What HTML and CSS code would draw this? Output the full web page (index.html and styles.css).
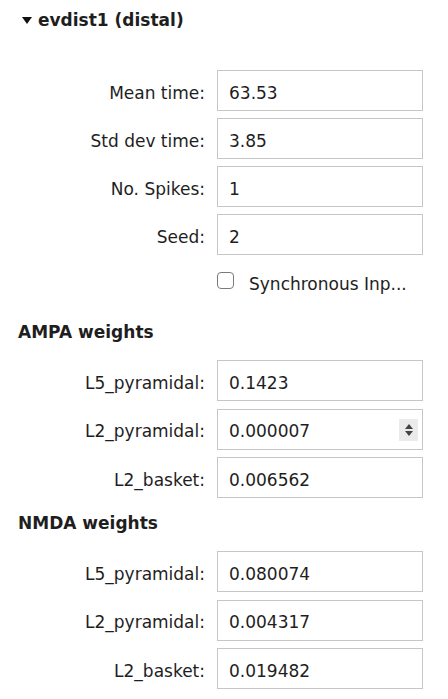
FILE: index.html
```html
<!DOCTYPE html>
<html>
<head>
<meta charset="utf-8">
<link rel="stylesheet" href="styles.css">
</head>
<body>
<div class="panel">
  <div class="title"><span class="caret"></span><span>evdist1 (distal)</span></div>
  <div class="rows first">
    <div class="row"><label class="lbl">Mean time:</label><div class="field">63.53</div></div>
    <div class="row"><label class="lbl">Std dev time:</label><div class="field">3.85</div></div>
    <div class="row"><label class="lbl">No. Spikes:</label><div class="field">1</div></div>
    <div class="row"><label class="lbl">Seed:</label><div class="field">2</div></div>
    <div class="check-row"><span class="lbl"></span><span class="box"></span><span class="check-text">Synchronous Inp...</span></div>
  </div>
  <div class="heading">AMPA weights</div>
  <div class="rows wide">
    <div class="row"><label class="lbl">L5_pyramidal:</label><div class="field">0.1423</div></div>
    <div class="row"><label class="lbl">L2_pyramidal:</label><div class="field">0.000007<span class="spinner"><span class="up"></span><span class="down"></span></span></div></div>
    <div class="row"><label class="lbl">L2_basket:</label><div class="field">0.006562</div></div>
  </div>
  <div class="heading">NMDA weights</div>
  <div class="rows wide">
    <div class="row"><label class="lbl">L5_pyramidal:</label><div class="field">0.080074</div></div>
    <div class="row"><label class="lbl">L2_pyramidal:</label><div class="field">0.004317</div></div>
    <div class="row"><label class="lbl">L2_basket:</label><div class="field">0.019482</div></div>
  </div>
</div>
</body>
</html>
```
FILE: styles.css
```css
html, body {
  margin: 0;
  padding: 0;
  background: #ffffff;
}
body {
  font-family: "DejaVu Sans", sans-serif;
  color: #1e1e1e;
  font-size: 17px;
}
.panel {
  padding: 9px 0 0 18px;
  width: 430px;
  box-sizing: border-box;
}
.title {
  display: flex;
  align-items: center;
  gap: 6px;
  font-weight: 700;
  font-size: 17px;
  line-height: 22px;
  height: 22px;
  padding-left: 4px;
}
.caret {
  width: 0;
  height: 0;
  border-left: 5.5px solid transparent;
  border-right: 5.5px solid transparent;
  border-top: 7px solid #111;
  margin-top: 1px;
}
.rows {
  display: flex;
  flex-direction: column;
  gap: 7px;
}
.rows.wide {
  gap: 7.5px;
}
.rows.first {
  margin-top: 39px;
}
.row {
  display: flex;
  align-items: center;
  gap: 12px;
}
.lbl {
  flex: 0 0 187px;
  text-align: right;
  line-height: 20px;
  padding-top: 4px;
  box-sizing: border-box;
  white-space: nowrap;
}
.field {
  position: relative;
  width: 206px;
  height: 41px;
  box-sizing: border-box;
  border: 1px solid #c6c6c6;
  padding: 4px 11px 0;
  display: flex;
  align-items: center;
  line-height: 20px;
}
.spinner {
  position: absolute;
  right: 4px;
  top: 9px;
  width: 19px;
  height: 22px;
  background: #ebebeb;
  display: flex;
  flex-direction: column;
  align-items: center;
  justify-content: center;
  gap: 2px;
}
.up {
  width: 0;
  height: 0;
  border-left: 4.5px solid transparent;
  border-right: 4.5px solid transparent;
  border-bottom: 5px solid #444;
}
.down {
  width: 0;
  height: 0;
  border-left: 4.5px solid transparent;
  border-right: 4.5px solid transparent;
  border-top: 5px solid #444;
}
.check-row {
  display: flex;
  align-items: flex-start;
  height: 38px;
  margin-bottom: 7px;
}
.check-row .lbl {
  padding: 0;
}
.box {
  flex: 0 0 auto;
  width: 15px;
  height: 15px;
  border: 1.5px solid #7a7a7a;
  border-radius: 4px;
  margin: 10px 0 0 12px;
}
.check-text {
  line-height: 20px;
  margin: 12px 0 0 15px;
  white-space: nowrap;
}
.heading {
  font-weight: 700;
  font-size: 17px;
  line-height: 22px;
  height: 22px;
  margin: 14px 0 17px;
}
```
